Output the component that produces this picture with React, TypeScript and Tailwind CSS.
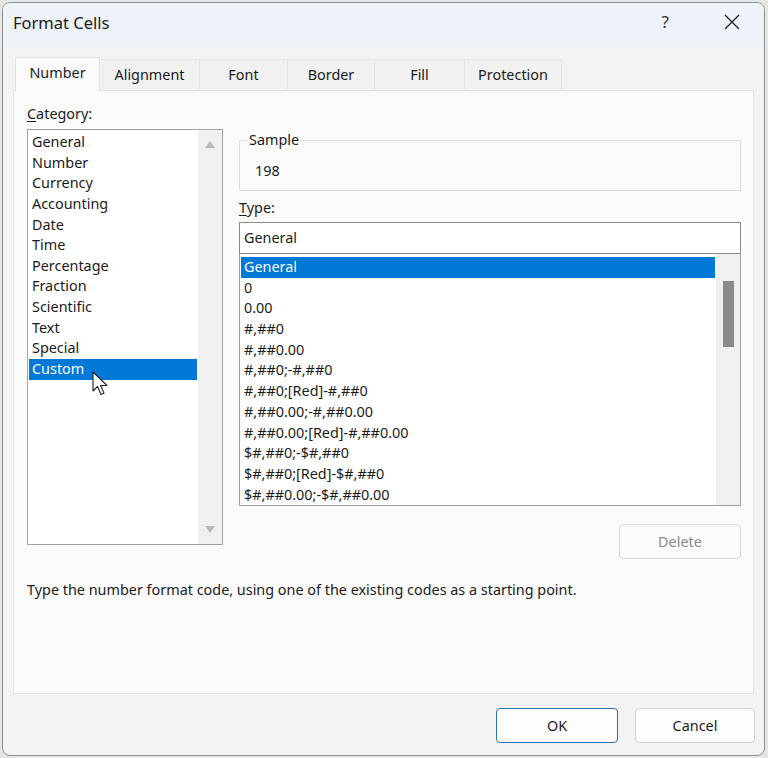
import React from "react";

const categories = [
  "General",
  "Number",
  "Currency",
  "Accounting",
  "Date",
  "Time",
  "Percentage",
  "Fraction",
  "Scientific",
  "Text",
  "Special",
  "Custom",
];

const types = [
  "General",
  "0",
  "0.00",
  "#,##0",
  "#,##0.00",
  "#,##0;-#,##0",
  "#,##0;[Red]-#,##0",
  "#,##0.00;-#,##0.00",
  "#,##0.00;[Red]-#,##0.00",
  "$#,##0;-$#,##0",
  "$#,##0;[Red]-$#,##0",
  "$#,##0.00;-$#,##0.00",
];

const tabs = [
  { label: "Number", w: "w-[85px]" },
  { label: "Alignment", w: "w-[100px]" },
  { label: "Font", w: "w-[88px]" },
  { label: "Border", w: "w-[87px]" },
  { label: "Fill", w: "w-[90px]" },
  { label: "Protection", w: "w-[97px]" },
];

function Cursor() {
  return (
    <svg
      className="absolute left-[63px] top-[12px]"
      width="20"
      height="27"
      viewBox="0 0 20 27"
    >
      <path
        d="M1 1 L1 20 L5.5 15.5 L9 23.5 L12 22.2 L8.6 14.5 L15 14.5 Z"
        fill="#ffffff"
        stroke="#222"
        strokeWidth="1.1"
        strokeLinejoin="round"
      />
    </svg>
  );
}

export default function App() {
  return (
    <div
      className="w-[768px] h-[758px] bg-[#e6e6e6] overflow-hidden pt-[2px] pl-[2px] text-[#1b1b1b]"
      style={{ fontFamily: '"Noto Sans", "Open Sans", sans-serif' }}
    >
      <div className="w-[763px] h-[754px] border border-[#8f8f8f] rounded-[8px] bg-[#f3f3f3] flex flex-col overflow-hidden">
        {/* Title bar */}
        <div className="h-[44px] bg-[#eef3f9] flex items-center pl-[10px] pr-[24px] shrink-0">
          <div className="text-[16.5px] text-[#1a1a1a] mt-[-4px]">Format Cells</div>
          <div className="ml-auto flex items-center mt-[-6px]">
            <span className="text-[17px] text-[#333] mr-[55px]">?</span>
            <svg width="16" height="16" viewBox="0 0 16 16">
              <path d="M1 1 L15 15 M15 1 L1 15" stroke="#222" strokeWidth="1.3" />
            </svg>
          </div>
        </div>

        {/* Tabs */}
        <div className="flex items-end pl-[12px] pt-[10px] shrink-0">
          {tabs.map((t, i) =>
            i === 0 ? (
              <div
                key={t.label}
                className={`${t.w} h-[34px] bg-[#fbfbfb] border border-b-0 border-[#e3e3e3] flex items-center justify-center text-[14.4px] relative z-10 -mb-px pb-[3px]`}
              >
                {t.label}
              </div>
            ) : (
              <div
                key={t.label}
                className={`${t.w} h-[31px] bg-[#f1f1f1] border-r border-t border-[#e4e4e4] flex items-center justify-center text-[14.4px] pb-[1px]`}
              >
                {t.label}
              </div>
            )
          )}
        </div>

        {/* Panel */}
        <div className="mx-[10px] h-[604px] bg-[#fbfbfb] border border-[#e3e3e3] shrink-0 pl-[13px] pr-[11px] pt-[13px]">
          <div className="flex gap-[16px]">
            {/* Left column */}
            <div className="w-[196px] flex flex-col">
              <div className="text-[14.4px] h-[20px] leading-[20px] mb-[5px]">
                <span className="underline underline-offset-2">C</span>ategory:
              </div>
              <div className="h-[416px] border border-[#a0a0a0] bg-white flex">
                <div className="flex-1 pt-[2px] pl-[1px] relative">
                  {categories.map((c) =>
                    c === "Custom" ? (
                      <div
                        key={c}
                        className="h-[20.65px] leading-[20px] bg-[#0078d7] text-white text-[14.4px] pl-[3px] relative"
                      >
                        {c}
                        <Cursor />
                      </div>
                    ) : (
                      <div key={c} className="h-[20.65px] leading-[20px] text-[14.4px] pl-[3px]">
                        {c}
                      </div>
                    )
                  )}
                </div>
                <div className="w-[24px] bg-[#f0f0f0] flex flex-col items-center justify-between py-[11px] ml-[1px]">
                  <svg width="10" height="7" viewBox="0 0 10 7">
                    <path d="M0 7 L5 0 L10 7 Z" fill="#b8b8b8" />
                  </svg>
                  <svg width="10" height="7" viewBox="0 0 10 7">
                    <path d="M0 0 L10 0 L5 7 Z" fill="#b8b8b8" />
                  </svg>
                </div>
              </div>
            </div>

            {/* Right column */}
            <div className="w-[502px] flex flex-col">
              <fieldset className="h-[61px] mt-[26px] border border-[#dedede] pl-[7px] pr-0 pb-0 m-0 min-w-0">
                <legend className="text-[14.4px] px-[2px] leading-[20px]">Sample</legend>
                <div className="pl-[8px] text-[14.4px] leading-[20px] mt-[11px]">198</div>
              </fieldset>
              <div className="text-[14.4px] h-[20px] leading-[20px] mt-[7px] mb-[4px]">
                <span className="underline underline-offset-2">T</span>ype:
              </div>
              <div className="h-[32px] border border-[#8a8a8a] bg-white flex items-center pl-[4px] text-[14.4px]">
                General
              </div>
              <div className="h-[252px] border border-[#a0a0a0] border-t-0 bg-white flex">
                <div className="flex-1 pt-[3px] pl-[1px]">
                  {types.map((t, i) =>
                    i === 0 ? (
                      <div
                        key={t}
                        className="h-[20.7px] leading-[20px] bg-[#0078d7] text-white text-[14.4px] pl-[3px]"
                      >
                        {t}
                      </div>
                    ) : (
                      <div key={t} className="h-[20.7px] leading-[20px] text-[14.4px] pl-[3px]">
                        {t}
                      </div>
                    )
                  )}
                </div>
                <div className="w-[24px] bg-[#f0f0f0] ml-[1px] pt-[27px] flex justify-center">
                  <div className="w-[11px] h-[66px] bg-[#8a8a8a]" />
                </div>
              </div>
              <div className="flex justify-end mt-[18px]">
                <div className="w-[122px] h-[35px] border border-[#dadada] rounded-[4px] bg-[#fbfbfb] flex items-center justify-center text-[14.4px] text-[#8a8a8a]">
                  Delete
                </div>
              </div>
            </div>
          </div>
          <div className="text-[14.4px] mt-[21px] leading-[20px]">
            Type the number format code, using one of the existing codes as a starting point.
          </div>
        </div>

        {/* Buttons */}
        <div className="flex justify-end gap-[17px] pr-[9px] pt-[14px]">
          <div className="w-[122px] h-[35px] border-[1.5px] border-[#2f6fb2] rounded-[4px] bg-[#fdfdfd] flex items-center justify-center text-[14.4px]">
            OK
          </div>
          <div className="w-[120px] h-[35px] border border-[#d3d3d3] rounded-[4px] bg-[#fdfdfd] flex items-center justify-center text-[14.4px]">
            Cancel
          </div>
        </div>
      </div>
    </div>
  );
}
